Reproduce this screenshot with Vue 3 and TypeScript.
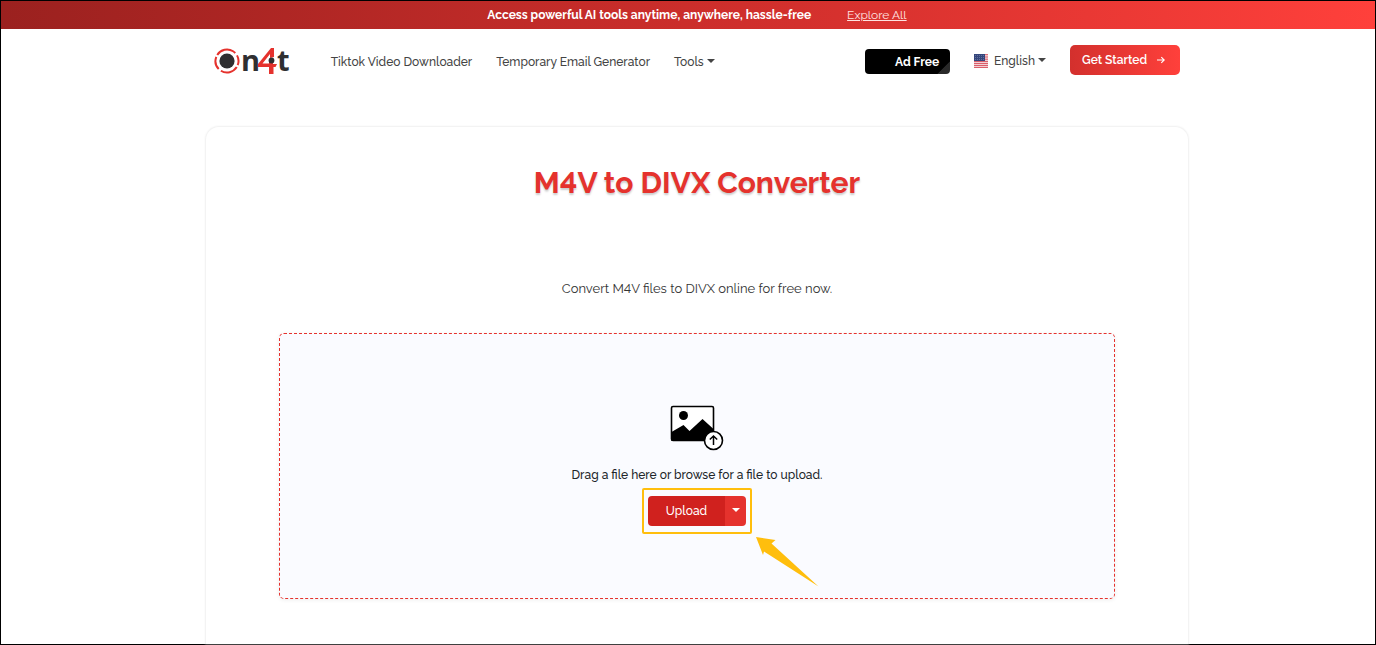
<script setup lang="ts">
interface NavItem {
  label: string
  menu?: boolean
}

const navItems: NavItem[] = [
  { label: 'Tiktok Video Downloader' },
  { label: 'Temporary Email Generator' },
  { label: 'Tools', menu: true },
]
</script>

<template>
  <div class="page">
    <div class="banner">
      <strong>Access powerful AI tools anytime, anywhere, hassle-free</strong>
      <a href="#explore">Explore All</a>
    </div>

    <header class="header">
      <a class="logo" href="#home" aria-label="On4t">
        <svg class="ring" width="26" height="26" viewBox="0 0 26 26" aria-hidden="true">
          <circle cx="13" cy="13" r="11.500" fill="none" stroke="#e5322d" stroke-width="2" pathLength="100" stroke-dasharray="29 4 14 3 25 4 18 3" transform="rotate(212 13 13)" />
          <circle cx="13" cy="13" r="7.600" fill="#2f2f31" />
        </svg>
        <span class="letter">n</span>
        <svg class="four" width="19" height="26" viewBox="0 0 19 26" aria-hidden="true">
          <path d="M16 0V9L12 10V6L4.500 15.500H11V14H15V16H19L17.500 19H15.500V26H11V19H0V16L13 0Z" fill="#e5322d" />
          <circle cx="13.500" cy="12.500" r="2.900" fill="#2f2f31" />
        </svg>
        <span class="letter">t</span>
      </a>

      <nav class="nav">
        <a v-for="item in navItems" :key="item.label" href="#nav">
          {{ item.label }}<i v-if="item.menu" class="caret"></i>
        </a>
      </nav>

      <div class="actions">
        <button class="ad-free" type="button">Ad Free</button>
        <button class="language" type="button">
          <svg width="14" height="14" viewBox="0 0 14 14" aria-hidden="true">
            <rect width="14" height="14" fill="#f4dfe2" />
            <path d="M0 .7H14M0 3H14M0 5.200H14M0 7.400H14M0 9.400H14M0 11.400H14M0 13.400H14" stroke="#d8505d" />
            <rect width="11" height="7" fill="#34467c" />
            <path d="M1 1.500H11M1 3.500H11M1 5.500H11" stroke="#7583aa" stroke-width=".7" stroke-dasharray="1 1" />
          </svg>
          <span>English<i class="caret"></i></span>
        </button>
        <a class="start" href="#start">
          Get Started
          <svg width="8" height="8" viewBox="0 0 8 8" aria-hidden="true">
            <path d="M0 4H7M4.300 1.200L7.200 4L4.300 6.800" fill="none" stroke="#fff" stroke-width="1.100" />
          </svg>
        </a>
      </div>
    </header>

    <main class="card">
      <h1>M4V to DIVX Converter</h1>
      <p class="intro">Convert M4V files to DIVX online for free now.</p>

      <section class="dropzone">
        <svg class="picture" width="54" height="46" viewBox="0 0 54 46" aria-hidden="true">
          <rect x="1.500" y="1.500" width="42" height="34" rx="1.500" fill="#fff" stroke="#000" stroke-width="1.600" />
          <circle cx="13.500" cy="10.500" r="4.500" />
          <path d="M1.500 27L13.500 20L19.500 26L32.500 14L43.500 24V36H1.500Z" />
          <circle cx="43.500" cy="35.500" r="9" fill="#fff" stroke="#000" stroke-width="1.600" />
          <path d="M43.500 40V31M39.800 34.500L43.500 31L47.200 34.500" fill="none" stroke="#000" stroke-width="1.500" />
        </svg>
        <p class="hint">Drag a file here or browse for a file to upload.</p>
        <div class="highlight">
          <div class="upload-group">
            <button class="upload" type="button">Upload</button>
            <button class="more" type="button" aria-label="More upload sources"><i class="caret"></i></button>
          </div>
          <svg class="pointer" width="64" height="52" viewBox="0 0 64 52" aria-hidden="true">
            <path d="M1 1L20.500 4L16.500 7.500L63.500 50.500L9 15.500L8 19Z" fill="#ffbe0d" />
          </svg>
        </div>
      </section>
    </main>
  </div>
</template>

<style>
body {
  margin: 0;
}
</style>

<style scoped>
.page {
  box-sizing: border-box;
  display: flex;
  flex-direction: column;
  min-height: 100vh;
  border: 1px solid #000;
  background: #fff;
  color: #444;
  font: 500 12px/20px Raleway, "Open Sans", sans-serif;
  font-variant-numeric: lining-nums;
}

.page * {
  box-sizing: border-box;
}

button {
  border: 0;
  padding: 0;
  font: inherit;
  color: inherit;
}

a {
  color: inherit;
  text-decoration: none;
}

.banner {
  display: flex;
  justify-content: center;
  align-items: center;
  gap: 36px;
  height: 28px;
  padding: 0 0 0 18px;
  background: linear-gradient(90deg, #9b211f, #d3302d 58%, #ff403b);
  color: #fff;
}

.banner a {
  color: #ffe2e0;
  font-weight: 400;
  text-decoration: underline;
}

.header {
  display: flex;
  align-items: center;
  width: calc(100% - 18px);
  max-width: 966px;
  height: 64px;
  margin-left: calc(max(18px, 50% + 9px - 483px));
}

.logo {
  display: flex;
  align-items: center;
  margin-right: 41px;
}

.letter {
  padding-bottom: 2px;
  color: #2f2f31;
  font: 700 29px/26px "Open Sans", sans-serif;
}

.ring {
  margin-right: 1px;
}

.four {
  margin-left: -2px;
}

.nav {
  display: flex;
  gap: 24px;
  padding-top: 2px;
}

.caret {
  display: inline-block;
  margin-left: 3px;
  border: 4px solid transparent;
  border-top-color: currentColor;
  border-bottom: 0;
  vertical-align: 3px;
}

.actions {
  display: flex;
  align-items: center;
  gap: 24px;
  margin-left: auto;
}

.ad-free {
  width: 85px;
  height: 25px;
  padding: 2px 11px 0 0;
  border-radius: 4px;
  background: linear-gradient(135deg, #000 88%, #292929 89%);
  color: #fff;
  font-weight: 700;
  text-align: right;
}

.language {
  display: flex;
  align-items: center;
  gap: 6px;
  background: none;
}

.start {
  display: flex;
  align-items: center;
  justify-content: space-between;
  width: 110px;
  height: 30px;
  margin-bottom: 2px;
  padding: 0 15px 0 12px;
  border-radius: 5px;
  background: linear-gradient(90deg, #d3302d, #ff403b);
  color: #fff;
  font-weight: 600;
}

.card {
  flex: 1;
  width: calc(100% - 18px);
  max-width: 984px;
  margin: 33px 0 0 calc(max(18px, 50% + 9px - 492px));
  padding: 35px 73px 40px;
  border: 1px solid #f3f3f3;
  border-bottom: 0;
  border-radius: 14px 14px 0 0;
  box-shadow: 0 0 2px #f1f1f1;
  text-align: center;
}

h1 {
  margin: 0;
  color: #e5322d;
  font-size: 30px;
  font-weight: 700;
  line-height: 42px;
  text-shadow: 0 2px 2px #ccc;
}

.intro {
  margin: 75px 0 34px;
  color: #333;
  font-size: 13px;
  font-weight: 400;
}

.dropzone {
  display: flex;
  flex-direction: column;
  align-items: center;
  min-height: 266px;
  padding-top: 71px;
  border: 1px dashed #e5322d;
  border-radius: 5px;
  background: #fafbff;
  box-shadow: 0 1px 4px #eee;
}

.hint {
  margin: 14px 0 3px;
  color: #212529;
}

.highlight {
  position: relative;
  padding: 6px 4px;
  border: 2px solid #ffbe0d;
  border-radius: 2px;
}

.upload-group {
  display: flex;
  height: 30px;
  overflow: hidden;
  border-radius: 4px;
  color: #fff;
}

.upload {
  width: 77px;
  background: #d0211e;
}

.more {
  width: 21px;
  background: #e5322d;
}

.more .caret {
  margin: 0;
}

.pointer {
  position: absolute;
  top: 46px;
  left: 111px;
}
</style>
